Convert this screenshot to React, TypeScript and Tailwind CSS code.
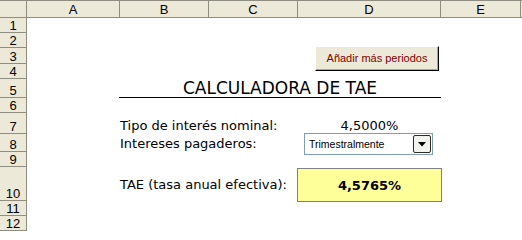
const headerCells = [
  { label: 'A', pos: 'col-start-2' },
  { label: 'B', pos: 'col-start-3' },
  { label: 'C', pos: 'col-start-4' },
  { label: 'D', pos: 'col-start-5' },
  { label: 'E', pos: 'col-start-6' },
]

const rowCells = [
  { n: 1, pos: 'row-start-2' },
  { n: 2, pos: 'row-start-3' },
  { n: 3, pos: 'row-start-4' },
  { n: 4, pos: 'row-start-5' },
  { n: 5, pos: 'row-start-6' },
  { n: 6, pos: 'row-start-7' },
  { n: 7, pos: 'row-start-8' },
  { n: 8, pos: 'row-start-9' },
  { n: 9, pos: 'row-start-10' },
  { n: 10, pos: 'row-start-11' },
  { n: 11, pos: 'row-start-12' },
  { n: 12, pos: 'row-start-13' },
]

const cellFont = "font-['DejaVu_Sans',Verdana,sans-serif] text-[13px] leading-none text-black"

export default function App() {
  return (
    <div className="grid h-[231px] w-[522px] grid-cols-[27px_93px_89px_89px_143px_80px_1fr] grid-rows-[18px_15px_15px_16px_15px_19px_15px_21px_18px_15px_34px_15px_15px] overflow-hidden bg-white font-['Liberation_Sans',Arial,sans-serif]">
      {/* corner + column headers */}
      <div className="col-start-1 row-start-1 border-t border-r border-b border-[#8f8d80] bg-[#ece9d8]" />
      {headerCells.map((c) => (
        <div
          key={c.label}
          className={`${c.pos} row-start-1 flex items-center justify-center border-t border-r border-b border-[#8f8d80] bg-[#ece9d8] text-[13px] leading-none text-black`}
        >
          {c.label}
        </div>
      ))}
      <div className="col-start-7 row-start-1 border-t border-b border-[#8f8d80] bg-[#ece9d8]" />

      {/* row headers */}
      {rowCells.map((r) => (
        <div
          key={r.n}
          className={`col-start-1 ${r.pos} flex items-end justify-center border-r border-b border-[#8f8d80] bg-[#ece9d8] text-[13px] leading-none text-black`}
        >
          {r.n}
        </div>
      ))}

      {/* floating button */}
      <button
        type="button"
        className="col-start-5 col-span-2 row-start-3 row-span-3 mt-[13px] ml-[17px] flex h-[25px] w-[124px] items-center justify-center self-start justify-self-start border border-t-white border-l-white border-r-black border-b-black bg-[#ece9d8] text-[11px] leading-none text-[#800000] shadow-[inset_-1px_-1px_0_#aca899]"
      >
        Añadir más periodos
      </button>

      {/* title */}
      <div className={`col-start-3 col-end-6 row-start-6 -ml-px flex items-end justify-center border-b border-black ${cellFont} text-[17px]`}>
        CALCULADORA DE TAE
      </div>

      {/* row 7 */}
      <div className={`col-start-3 col-span-3 row-start-8 flex items-end whitespace-nowrap pb-[2px] ${cellFont}`}>
        Tipo de interés nominal:
      </div>
      <div className={`col-start-5 row-start-8 flex items-end justify-center pb-[2px] ${cellFont}`}>
        4,5000%
      </div>

      {/* row 8 */}
      <div className={`col-start-3 col-span-2 row-start-9 flex items-end whitespace-nowrap pb-[2px] ${cellFont}`}>
        Intereses pagaderos:
      </div>
      <div className="col-start-5 row-start-9 row-span-2 -mt-px ml-[6px] flex h-[22px] w-[129px] items-center self-start border border-[#7f9db9] bg-white">
        <span className="flex-1 pl-[4px] text-[10.5px] leading-none text-black">Trimestralmente</span>
        <span className="mr-[1px] flex h-[18px] w-[18px] items-center justify-center rounded-[2px] border border-[#2b2b2b] bg-[#f3f3ee]">
          <svg width="8" height="5" viewBox="0 0 8 5">
            <path d="M0 0h8L4 4.5z" fill="#000" />
          </svg>
        </span>
      </div>

      {/* row 10 */}
      <div className={`col-start-3 col-span-2 row-start-11 mt-[1px] flex items-center whitespace-nowrap ${cellFont}`}>
        TAE (tasa anual efectiva):
      </div>
      <div className={`col-start-5 row-start-11 -ml-px mt-[1px] flex h-[34px] w-[145px] items-center justify-center self-start border border-[#808080] bg-[#ffff99] font-bold ${cellFont}`}>
        4,5765%
      </div>
    </div>
  )
}
